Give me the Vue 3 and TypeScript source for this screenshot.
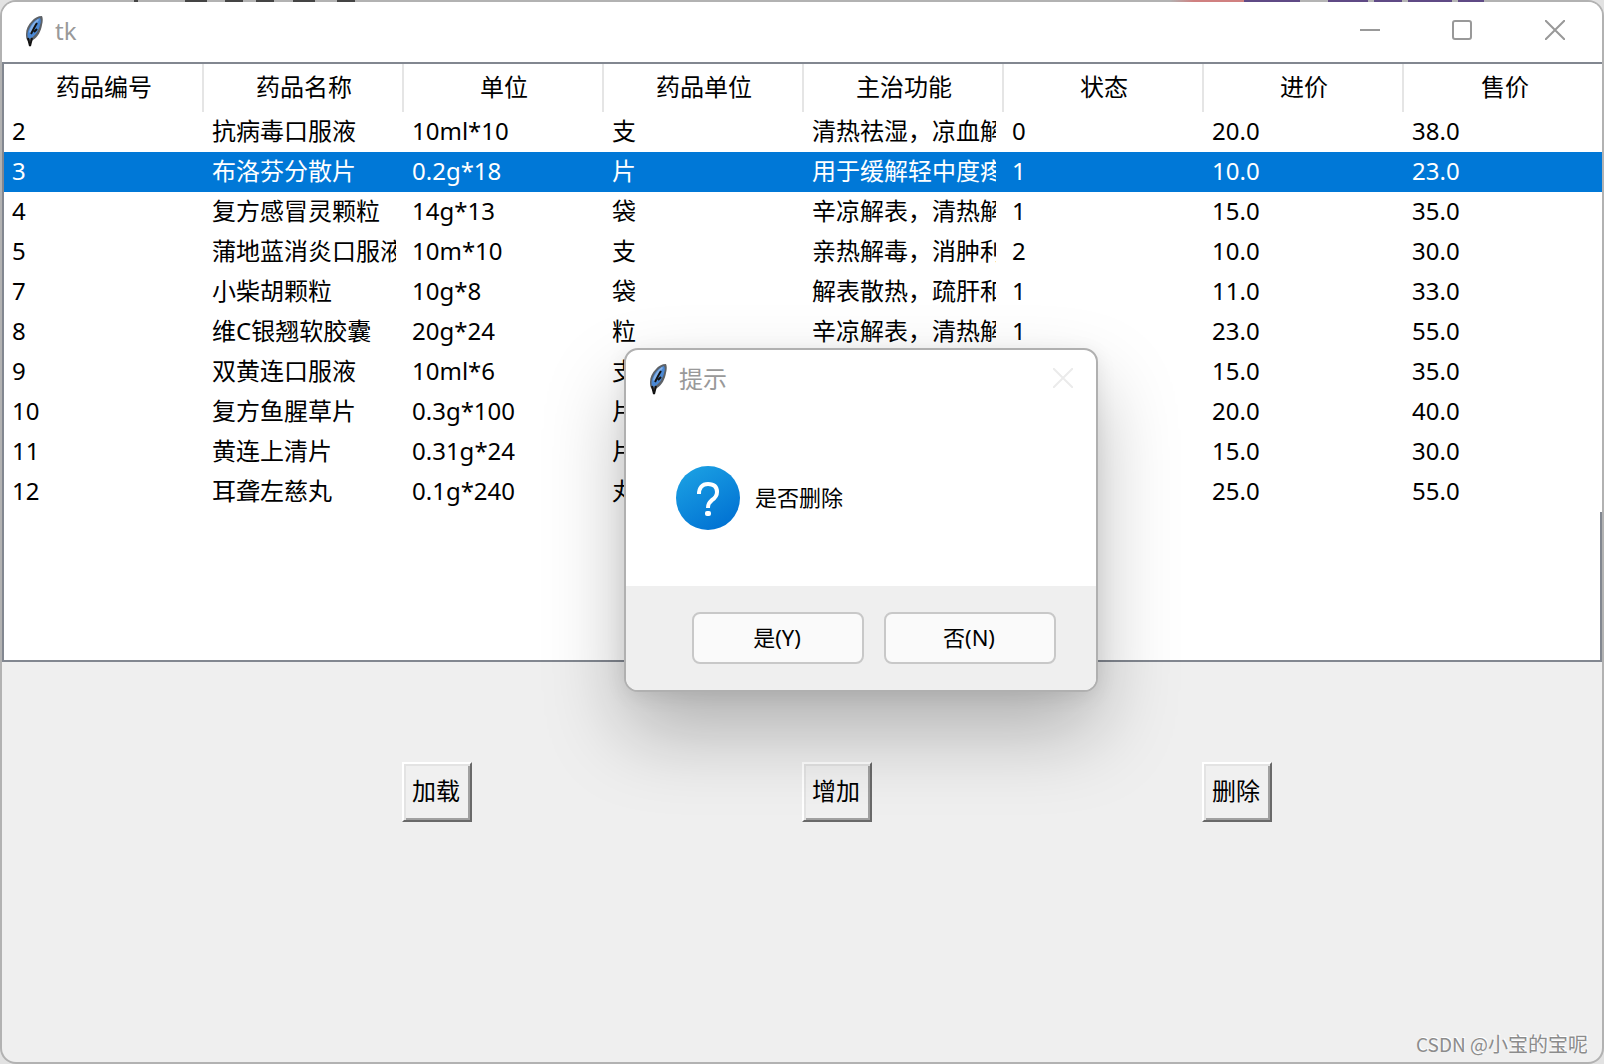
<script setup lang="ts">
import { ref } from 'vue'

interface Medicine {
  id: number
  name: string
  spec: string
  unit: string
  usage: string
  status: number
  cost: string
  price: string
}

const columns = ['药品编号', '药品名称', '单位', '药品单位', '主治功能', '状态', '进价', '售价']

const rows: Medicine[] = [
  { id: 2, name: '抗病毒口服液', spec: '10ml*10', unit: '支', usage: '清热祛湿，凉血解', status: 0, cost: '20.0', price: '38.0' },
  { id: 3, name: '布洛芬分散片', spec: '0.2g*18', unit: '片', usage: '用于缓解轻中度疼', status: 1, cost: '10.0', price: '23.0' },
  { id: 4, name: '复方感冒灵颗粒', spec: '14g*13', unit: '袋', usage: '辛凉解表，清热解', status: 1, cost: '15.0', price: '35.0' },
  { id: 5, name: '蒲地蓝消炎口服液', spec: '10m*10', unit: '支', usage: '亲热解毒，消肿利', status: 2, cost: '10.0', price: '30.0' },
  { id: 7, name: '小柴胡颗粒', spec: '10g*8', unit: '袋', usage: '解表散热，疏肝和', status: 1, cost: '11.0', price: '33.0' },
  { id: 8, name: '维C银翘软胶囊', spec: '20g*24', unit: '粒', usage: '辛凉解表，清热解', status: 1, cost: '23.0', price: '55.0' },
  { id: 9, name: '双黄连口服液', spec: '10ml*6', unit: '支', usage: '', status: 1, cost: '15.0', price: '35.0' },
  { id: 10, name: '复方鱼腥草片', spec: '0.3g*100', unit: '片', usage: '', status: 1, cost: '20.0', price: '40.0' },
  { id: 11, name: '黄连上清片', spec: '0.31g*24', unit: '片', usage: '', status: 1, cost: '15.0', price: '30.0' },
  { id: 12, name: '耳聋左慈丸', spec: '0.1g*240', unit: '丸', usage: '', status: 1, cost: '25.0', price: '55.0' },
]

const selectedId = ref(3)
const actions = ['加载', '增加', '删除']
</script>

<template>
  <div class="desktop">
    <main class="window">
      <header class="titlebar">
        <svg class="feather" viewBox="0 0 20 32" aria-hidden="true">
          <path d="M18 1C14 1 10 3 8 6 4 10 2 14 2 19c0 3 0 5 2 7 1 1 4 0 5-1 5-3 8-9 9-15 1-4 1-7 0-9z" fill="#5d6166" />
          <path d="M16 3C12 4 7 9 5 14c-2 4-2 8 0 10 6-2 10-9 11-14 1-3 1-5 0-7z" fill="#4a88d4" />
          <path d="M14 4C10 7 6 12 5 17l2 2c1-5 4-10 8-14z" fill="#86b2e8" />
          <path d="M13 8C11 11 9 15 7 19M10 17l3-3M4 23l2 8 2-8" fill="none" stroke="#111" stroke-width="2" />
        </svg>
        <h1 class="title">tk</h1>
        <button class="control" type="button" aria-label="最小化">
          <svg viewBox="0 0 20 20"><path d="M0 10h20" /></svg>
        </button>
        <button class="control" type="button" aria-label="最大化">
          <svg viewBox="0 0 20 20"><rect x="1" y="1" width="18" height="18" rx="2" /></svg>
        </button>
        <button class="control" type="button" aria-label="关闭">
          <svg viewBox="0 0 20 20"><path d="M0 0l20 20M20 0L0 20" /></svg>
        </button>
      </header>

      <section class="tree">
        <table>
          <thead>
            <tr>
              <th v-for="column in columns" :key="column" scope="col">{{ column }}</th>
            </tr>
          </thead>
          <tbody>
            <tr
              v-for="row in rows"
              :key="row.id"
              :class="{ selected: row.id === selectedId }"
              @click="selectedId = row.id"
            >
              <td>{{ row.id }}</td>
              <td>{{ row.name }}</td>
              <td>{{ row.spec }}</td>
              <td>{{ row.unit }}</td>
              <td>{{ row.usage }}</td>
              <td>{{ row.status }}</td>
              <td>{{ row.cost }}</td>
              <td>{{ row.price }}</td>
            </tr>
          </tbody>
        </table>
        <div class="tree-rest"></div>
      </section>

      <section class="actions">
        <button v-for="action in actions" :key="action" class="action" type="button">{{ action }}</button>
      </section>

      <p class="credit"><span class="credit-site">CSDN @</span>小宝的宝呢</p>

      <div class="dialog" role="dialog" aria-labelledby="dialog-title" aria-describedby="dialog-text">
        <header class="dialog-bar">
          <svg class="feather" viewBox="0 0 20 32" aria-hidden="true">
            <path d="M18 1C14 1 10 3 8 6 4 10 2 14 2 19c0 3 0 5 2 7 1 1 4 0 5-1 5-3 8-9 9-15 1-4 1-7 0-9z" fill="#5d6166" />
            <path d="M16 3C12 4 7 9 5 14c-2 4-2 8 0 10 6-2 10-9 11-14 1-3 1-5 0-7z" fill="#4a88d4" />
            <path d="M14 4C10 7 6 12 5 17l2 2c1-5 4-10 8-14z" fill="#86b2e8" />
            <path d="M13 8C11 11 9 15 7 19M10 17l3-3M4 23l2 8 2-8" fill="none" stroke="#111" stroke-width="2" />
          </svg>
          <h2 id="dialog-title" class="title">提示</h2>
          <button class="dialog-close" type="button" aria-label="关闭" disabled>
            <svg viewBox="0 0 20 20"><path d="M0 0l20 20M20 0L0 20" /></svg>
          </button>
        </header>
        <div class="dialog-body">
          <svg class="question" viewBox="0 0 64 64" aria-hidden="true">
            <defs>
              <linearGradient id="question-fill" x1="0.2" y1="0" x2="0.8" y2="1">
                <stop offset="0" stop-color="#1ba0e3" />
                <stop offset="1" stop-color="#0070d2" />
              </linearGradient>
            </defs>
            <circle cx="32" cy="32" r="32" fill="url(#question-fill)" />
            <path
              d="M23 28c0-6 3-10 9-10s9 3 9 8c0 4-2 6-5 8-3 3-4 4-4 8"
              fill="none"
              stroke="#fff"
              stroke-width="4"
            />
            <rect x="29" y="45" width="6" height="5" rx="2" fill="#fff" />
          </svg>
          <p id="dialog-text">是否删除</p>
        </div>
        <footer class="dialog-foot">
          <button class="answer" type="button">是(Y)</button>
          <button class="answer" type="button">否(N)</button>
        </footer>
      </div>
    </main>
  </div>
</template>

<style>
body {
  margin: 0;
}
</style>

<style scoped>
.desktop {
  position: relative;
  box-sizing: border-box;
  min-height: 100vh;
  padding: 2px;
  display: flex;
  background: #e2e2e2;
  font-family: "Noto Sans", "Noto Sans CJK SC", sans-serif;
  font-size: 24px;
  color: #000;
}

/* Slivers of the windows behind, showing above the title bar. */
.desktop::before {
  content: "";
  position: absolute;
  z-index: 1;
  top: 0;
  left: 0;
  right: 0;
  height: 2px;
  background:
    linear-gradient(90deg,
      transparent 134px, #444 134px 138px,
      transparent 138px 185px, #444 185px 207px,
      transparent 207px 225px, #444 225px 243px,
      transparent 243px 256px, #444 256px 274px,
      transparent 274px 293px, #444 293px 315px,
      transparent 315px 337px, #444 337px 355px,
      transparent 355px),
    linear-gradient(270deg,
      transparent 120px, #5f4a85 120px 146px,
      #b4b4b4 146px 152px, #5f4a85 152px 196px,
      #b4b4b4 196px 202px, #5f4a85 202px 230px,
      #b4b4b4 230px 236px, #5f4a85 236px 276px,
      #b4b4b4 276px 304px, #5f4a85 304px 360px,
      #d08080 360px 410px, transparent 434px);
}

.window {
  position: relative;
  flex: 1;
  min-width: 0;
  display: flex;
  flex-direction: column;
  overflow: hidden;
  border-radius: 14px;
  background: #efefef;
  box-shadow: 0 0 0 2px #b2b2b2;
}

button {
  margin: 0;
  padding: 0;
  border: 0;
  background: none;
  font-family: inherit;
  color: inherit;
}

.titlebar {
  height: 60px;
  display: flex;
  align-items: center;
  padding-left: 22px;
  background: #fff;
}

.feather {
  width: 20px;
  height: 32px;
  flex: none;
  margin-bottom: 2px;
}

.title {
  flex: 1;
  margin: 0 0 2px 11px;
  font-size: 24px;
  font-weight: 400;
  line-height: 32px;
  color: #999;
}

.control {
  width: 92px;
  height: 56px;
  align-self: flex-start;
  display: grid;
  place-items: center;
}

.control:last-child {
  width: 94px;
}

.control svg,
.dialog-close svg {
  width: 20px;
  height: 20px;
  fill: none;
  stroke: #999;
  stroke-width: 2;
}

.tree {
  height: 596px;
  display: flex;
  flex-direction: column;
  overflow: hidden;
  border: 2px solid #828790;
  border-right: 0;
  background: #fff;
}

.tree table {
  width: calc(100% + 2px);
  table-layout: fixed;
  border-collapse: separate;
  border-spacing: 0;
}

.tree th {
  height: 48px;
  box-sizing: border-box;
  padding: 0 0 2px 2px;
  border-right: 2px solid #e5e5e5;
  font-weight: 400;
  line-height: 44px;
  text-align: center;
}

.tree th:last-child {
  border-right: 0;
}

.tree td {
  height: 40px;
  box-sizing: border-box;
  padding: 0 8px 2px;
  line-height: 38px;
  white-space: nowrap;
  overflow: hidden;
  overflow: clip;
  overflow-clip-margin: content-box;
}

.selected td {
  background: #0078d7;
  color: #fff;
}

.tree-rest {
  flex: 1;
  border-right: 2px solid #828790;
}

.actions {
  display: grid;
  grid-template-columns: repeat(4, 1fr);
  padding-top: 100px;
}

.action {
  width: 70px;
  height: 60px;
  padding: 0 2px 2px 0;
  border: 2px solid;
  border-color: #fff #696969 #696969 #fff;
  box-shadow: inset 2px 2px #e3e3e3, inset -2px -2px #a0a0a0;
  background: #f0f0f0;
  font-size: 24px;
  line-height: 32px;
}

.action:first-child {
  grid-column-start: 2;
}

.credit {
  margin: auto 14px 2px auto;
  font-family: "Noto Sans CJK SC", sans-serif;
  font-size: 20px;
  line-height: 32px;
  color: #8c8c8c;
  text-shadow: 1px -1px #fff;
}

.credit-site {
  font-size: 19px;
}

.dialog {
  position: absolute;
  top: 346px;
  left: 622px;
  width: 470px;
  display: flex;
  flex-direction: column;
  border: 2px solid #b0b0b0;
  border-radius: 14px;
  background: #fff;
  box-shadow: 0 40px 80px rgba(0, 0, 0, 0.26), 0 4px 20px rgba(0, 0, 0, 0.08);
}

.dialog-bar {
  height: 60px;
  display: flex;
  align-items: center;
  padding-left: 22px;
}

.dialog-close {
  width: 66px;
  height: 56px;
  align-self: flex-start;
  display: grid;
  place-items: center;
}

.dialog-close svg {
  stroke: #ebebeb;
}

.dialog-body {
  height: 176px;
  display: flex;
  align-items: center;
  gap: 15px;
  padding: 0 50px;
  box-sizing: border-box;
}

.dialog-body p {
  margin: 0 0 2px;
  font-size: 22px;
  line-height: 32px;
}

.question {
  width: 64px;
  height: 64px;
}

.dialog-foot {
  display: flex;
  justify-content: flex-end;
  gap: 20px;
  padding: 26px 40px;
  border-radius: 0 0 12px 12px;
  background: #efefef;
}

.answer {
  width: 172px;
  height: 52px;
  padding: 0 2px 2px 0;
  border: 2px solid #c8c8c8;
  border-radius: 8px;
  background: #fafafa;
  font-size: 22px;
  line-height: 32px;
}
</style>
